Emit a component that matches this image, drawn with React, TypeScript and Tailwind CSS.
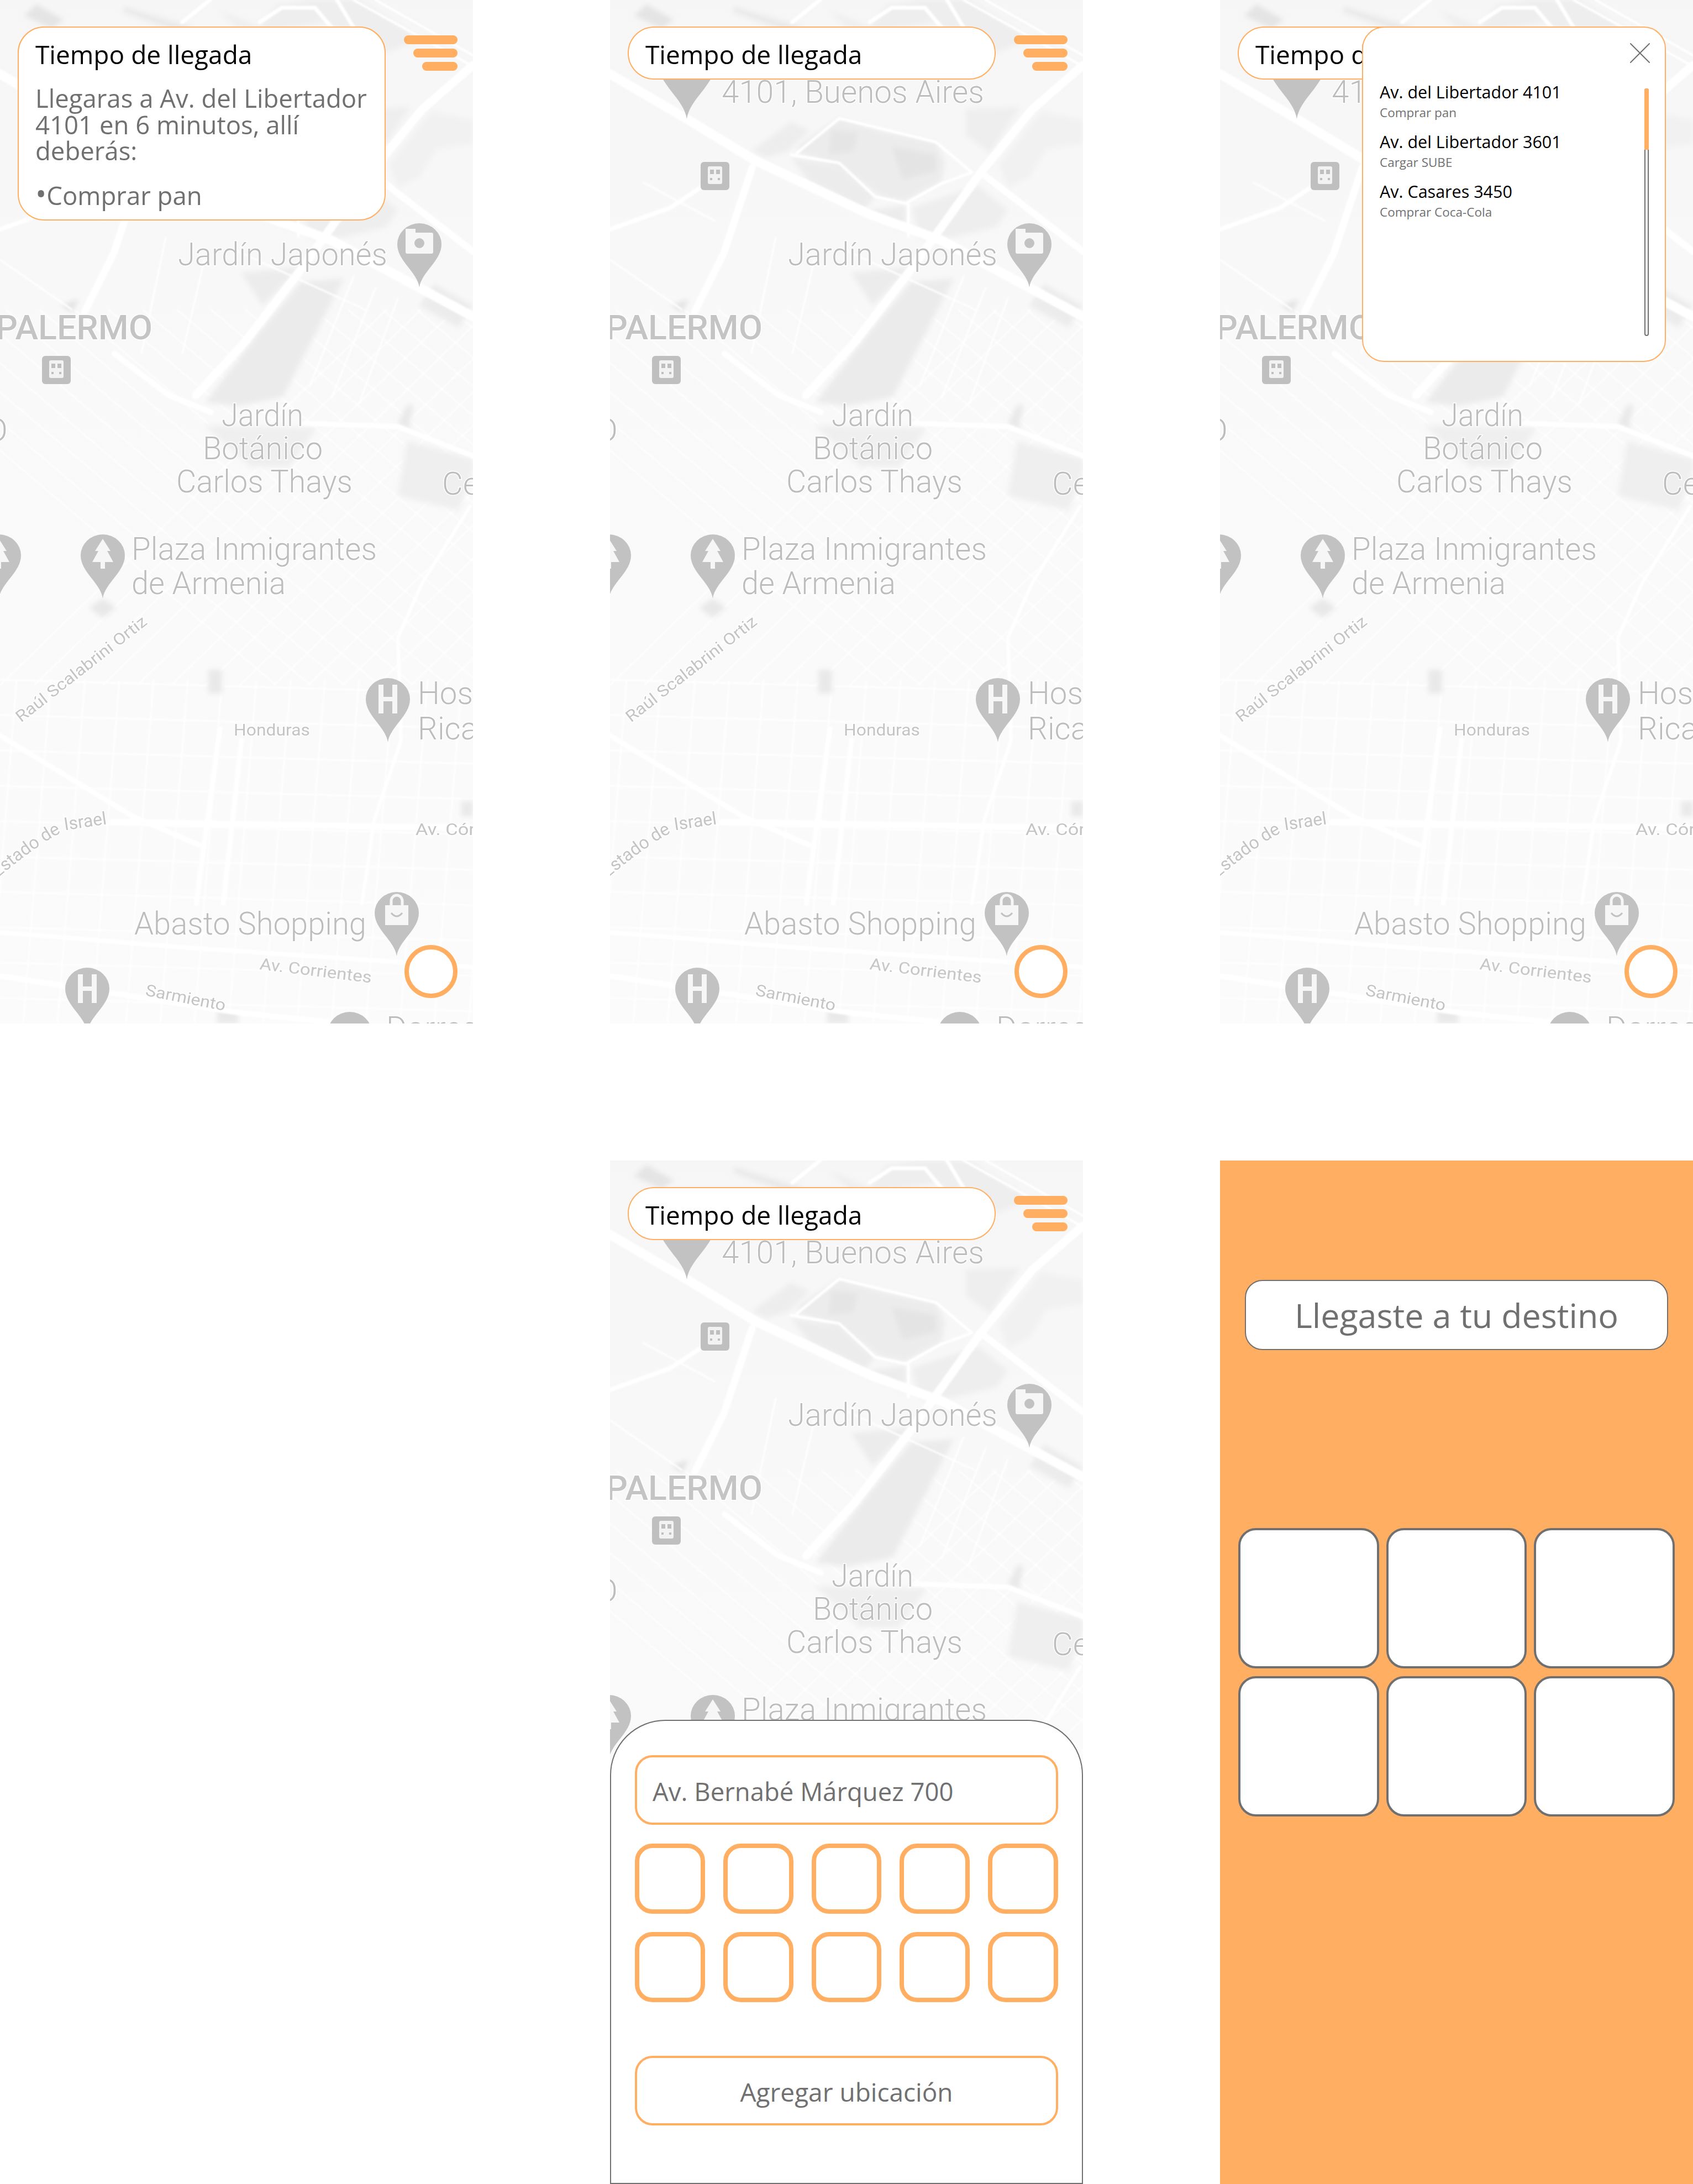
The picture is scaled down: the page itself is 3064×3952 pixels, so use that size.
import React from "react";
import { X } from "lucide-react";

const blobs: { pts: string; fill: string }[] = [
  { pts: "44,28 66,8 115,36 93,51", fill: "#e4e4e4" },
  { pts: "224,12 350,50 330,60 224,22", fill: "#e9e9e9" },
  { pts: "398,20 470,50 500,10 560,0 650,0 760,70 700,95 620,60 590,40 470,60 430,50", fill: "#eeeeee" },
  { pts: "257,273 328,221 360,237 322,273 284,285", fill: "#ededed" },
  { pts: "344,261 415,214 491,237 590,257 606,293 600,328 535,364 491,356 415,300 338,277", fill: "#ececec" },
  { pts: "400,235 450,240 440,275 395,280", fill: "#e5e5e5" },
  { pts: "510,265 590,280 590,310 530,325", fill: "#e4e4e4" },
  { pts: "328,285 415,300 480,356 459,380 360,328", fill: "#ececec" },
  { pts: "644,198 742,194 688,277 644,245", fill: "#eeeeee" },
  { pts: "704,297 780,202 856,217 856,260 790,270 760,320 720,340", fill: "#f1f1f1" },
  { pts: "546,376 666,336 720,380 700,410 620,430 560,430", fill: "#eeeeee" },
  { pts: "469,380 535,372 535,420", fill: "#ececec" },
  { pts: "437,494 546,482 475,553", fill: "#ececec" },
  { pts: "622,504 512,718 430,735 372,728 470,600 545,510", fill: "#ebebeb" },
  { pts: "371,770 573,774 524,845 453,845", fill: "#efefef" },
  { pts: "737,798 856,830 856,853 830,924 720,897", fill: "#efefef" },
  { pts: "720,766 737,733 748,733 740,778", fill: "#e9e9e9" },
  { pts: "759,553 786,514 856,553 830,593", fill: "#ececec" },
  { pts: "110,553 142,541 131,565", fill: "#e3e3e3" },
  { pts: "377,1212 402,1212 402,1255 377,1255", fill: "#e9e9e9" },
  { pts: "393,1829 431,1829 431,1852 393,1852", fill: "#e9e9e9" },
  { pts: "835,1450 856,1450 856,1477 835,1477", fill: "#e9e9e9" },
];

const roads: { d: string; w: number }[] = [
  { d: "M0 134 L142 217 L262 290 L470 388 L600 435 L856 573", w: 17 },
  { d: "M856 118 L764 198 L671 312 L546 486 L442 620 L355 715", w: 15 },
  { d: "M257 304 L207 455 L153 565", w: 13 },
  { d: "M0 415 L109 376 L169 336", w: 8 },
  { d: "M338 277 L415 214 L590 257 L655 312 L600 332 L535 368 L480 356 L415 295 L328 280", w: 5 },
  { d: "M540 368 L540 428", w: 5 },
  { d: "M671 312 L856 455", w: 12 },
  { d: "M380 0 L330 40 M610 0 L640 50 M470 40 L510 14 L570 14 L600 50", w: 7 },
  { d: "M640 0 L856 120 M680 0 L856 100", w: 4 },
  { d: "M551 766 L720 772 L856 825", w: 9 },
  { d: "M207 640 L305 715 L382 746", w: 10 },
  { d: "M851 916 L764 1055 L720 1154 L726 1339 L677 1485 L655 1635", w: 6 },
  { d: "M202 1487 L753 1497 L856 1497", w: 11 },
  { d: "M0 1331 L240 1477 L360 1529", w: 9 },
  { d: "M398 1319 L355 1635", w: 9 },
  { d: "M437 1339 L404 1635", w: 9 },
  { d: "M0 1687 L327 1714 L856 1750", w: 8 },
  { d: "M0 1766 L437 1833 L620 1852", w: 10 },
  { d: "M300 430 L256 640 M370 470 L330 640 M420 450 L660 560", w: 3 },
  { d: "M640 500 L560 700 M680 520 L600 720 M720 540 L650 730", w: 3 },
  { d: "M0 470 L130 560 M60 330 L190 400", w: 3 },
];

const labels: { text: string; x: number; y: number; w: number; size: number; heavy?: boolean; rotate?: number }[] = [
  { text: "4101, Buenos Aires", x: 202, y: 186, w: 475, size: 58 },
  { text: "Jardín Japonés", x: 322, y: 480, w: 379, size: 58 },
  { text: "PALERMO", x: -8, y: 614, w: 284, size: 62, heavy: true },
  { text: "Jardín", x: 401, y: 771, w: 148, size: 58 },
  { text: "Botánico", x: 367, y: 831, w: 217, size: 58 },
  { text: "Carlos Thays", x: 319, y: 891, w: 319, size: 58 },
  { text: "Ce", x: 800, y: 895, w: 68, size: 58 },
  { text: "O", x: -28, y: 798, w: 42, size: 58 },
  { text: "Plaza Inmigrantes", x: 238, y: 1013, w: 444, size: 58 },
  { text: "de Armenia", x: 238, y: 1075, w: 279, size: 58 },
  { text: "Hos", x: 756, y: 1274, w: 100, size: 58 },
  { text: "Rica", x: 756, y: 1338, w: 108, size: 58 },
  { text: "Honduras", x: 423, y: 1331, w: 138, size: 29, heavy: true },
  { text: "Av. Cór", x: 752, y: 1511, w: 108, size: 29, heavy: true },
  { text: "Abasto Shopping", x: 243, y: 1691, w: 420, size: 58 },
  { text: "Av. Corrientes", x: 469, y: 1754, w: 204, size: 29, heavy: true, rotate: 7 },
  { text: "Sarmiento", x: 262, y: 1801, w: 147, size: 29, heavy: true, rotate: 11 },
  { text: "Raúl Scalabrini Ortiz", x: 38, y: 1308, w: 292, size: 29, heavy: true, rotate: -38 },
  { text: "Dorrego", x: 699, y: 1880, w: 200, size: 58 },
];

const Pin = ({ x, y, scale = 1, children }: { x: number; y: number; scale?: number; children?: React.ReactNode }) => (
  <g transform={`translate(${x} ${y}) scale(${scale})`}>
    <path d="M0 0 C-4 -28 -40 -48 -40 -78 A40 38 0 0 1 40 -78 C40 -48 4 -28 0 0Z" fill="#c2c2c2" />
    {children}
  </g>
);

const HIcon = () => <path d="M-17 -104 h9 v22 h16 v-22 h9 v52 h-9 v-22 h-16 v22 h-9z" fill="#f6f6f6" />;

const TreeIcon = () => <path d="M0 -108 L14 -86 L8 -86 L19 -66 L4 -66 L4 -54 L-4 -54 L-4 -66 L-19 -66 L-8 -86 L-14 -86Z" fill="#f6f6f6" />;

const Transit = ({ x, y }: { x: number; y: number }) => (
  <g transform={`translate(${x} ${y})`}>
    <rect width="52" height="51" rx="6" fill="#bfbfbf" />
    <rect x="13" y="8" width="26" height="32" rx="3" fill="#f2f2f2" />
    <rect x="17" y="14" width="7" height="8" fill="#bfbfbf" />
    <rect x="28" y="14" width="7" height="8" fill="#bfbfbf" />
    <rect x="17" y="29" width="4" height="4" fill="#bfbfbf" />
    <rect x="31" y="29" width="4" height="4" fill="#bfbfbf" />
  </g>
);

const diagonalA = Array.from({ length: 26 }, (_, i) => i * 62 - 300);
const verticals = Array.from({ length: 15 }, (_, i) => i * 62);
const horizontals = Array.from({ length: 10 }, (_, i) => 1230 + i * 64);

// the google map behind the first four screens, redrawn
const MapBackground = () => (
  <svg viewBox="0 0 856 1852" className="absolute inset-0 h-[1852px] w-[856px]">
    <defs>
      <linearGradient id="mapShade" x1="0" y1="0" x2="0" y2="1">
        <stop offset="0" stopColor="#f6f6f6" />
        <stop offset="0.4" stopColor="#f9f9f9" />
        <stop offset="1" stopColor="#fbfbfb" />
      </linearGradient>
      <filter id="softBlob">
        <feGaussianBlur stdDeviation="4" />
      </filter>
      <filter id="soft">
        <feGaussianBlur stdDeviation="1.6" />
      </filter>
      <filter id="softText">
        <feGaussianBlur stdDeviation="0.7" />
      </filter>
    </defs>
    <rect width="856" height="1852" fill="url(#mapShade)" />
    <g filter="url(#soft)">
      <g stroke="#ffffff" strokeWidth="2.5" opacity="0.9">
        {diagonalA.map((o) => (
          <line key={`a${o}`} x1={o} y1={560} x2={o + 800} y2={1240} />
        ))}
        {diagonalA.map((o) => (
          <line key={`b${o}`} x1={o + 300} y1={1240} x2={o + 1000} y2={560} />
        ))}
      </g>
      <g stroke="#ffffff" strokeWidth="3" opacity="0.9">
        {verticals.map((o) => (
          <line key={`v${o}`} x1={o + 30} y1={1230} x2={o - 20} y2={1852} />
        ))}
        {horizontals.map((o) => (
          <line key={`h${o}`} x1={0} y1={o} x2={856} y2={o + 24} />
        ))}
      </g>
    </g>
    <g filter="url(#softBlob)">
      {blobs.map((b) => (
        <polygon key={b.pts} points={b.pts} fill={b.fill} />
      ))}
      <path d="M186 1083 L210 1100 L186 1118 L162 1100Z" fill="#e8e8e8" />
    </g>
    <g filter="url(#soft)" fill="none" stroke="#ffffff" strokeLinejoin="round" strokeLinecap="round">
      {roads.map((r) => (
        <path key={r.d} d={r.d} strokeWidth={r.w} />
      ))}
    </g>
    <g filter="url(#softText)">
      <Pin x={139} y={215} scale={1.3} />
      <Pin x={759} y={520}>
        <rect x="-25" y="-99" width="50" height="38" rx="3" fill="#f6f6f6" />
        <rect x="-25" y="-106" width="18" height="8" fill="#f6f6f6" />
        <circle cy="-80" r="9" fill="#c2c2c2" />
      </Pin>
      <Pin x={186} y={1083}>
        <TreeIcon />
      </Pin>
      <Pin x={-2} y={1083}>
        <TreeIcon />
      </Pin>
      <Pin x={702} y={1343}>
        <HIcon />
      </Pin>
      <Pin x={158} y={1867}>
        <HIcon />
      </Pin>
      <Pin x={718} y={1730}>
        <rect x="-21" y="-92" width="42" height="36" fill="#f6f6f6" />
        <path d="M-10 -92 V-100 A10 10 0 0 1 10 -100 V-92" fill="none" stroke="#f6f6f6" strokeWidth="5" />
        <path d="M-10 -78 Q0 -66 10 -78" fill="none" stroke="#c2c2c2" strokeWidth="3" />
      </Pin>
      <Pin x={633} y={1947} />
      <Transit x={164} y={293} />
      <Transit x={76} y={644} />
      <g className="font-['Roboto',sans-serif]">
        {labels.map((l) => (
          <text
            key={l.text}
            x={l.x}
            y={l.y}
            fontSize={l.size}
            fontWeight={l.size > 60 ? 500 : l.heavy ? 400 : 300}
            fill={l.heavy ? "#c4c4c4" : "#bdbdbd"}
            stroke="#ffffff"
            strokeWidth={3}
            paintOrder="stroke"
            textLength={l.w}
            lengthAdjust="spacingAndGlyphs"
            transform={l.rotate ? `rotate(${l.rotate} ${l.x} ${l.y})` : undefined}
          >
            {l.text}
          </text>
        ))}
        <path id="israel" d="M-20 1602 Q70 1525 120 1502 L215 1488" fill="none" />
        <text fontSize={32} fill="#c4c4c4" stroke="#ffffff" strokeWidth={3} paintOrder="stroke">
          <textPath href="#israel" startOffset={20}>
            Estado de Israel
          </textPath>
        </text>
      </g>
    </g>
  </svg>
);

const MenuIcon = () => (
  <div className="flex w-[97px] flex-col items-end gap-[8px]">
    <div className="h-[16px] w-[97px] rounded-full bg-[#ffae62]" />
    <div className="h-[16px] w-[80px] rounded-full bg-[#ffae62]" />
    <div className="h-[16px] w-[64px] rounded-full bg-[#ffae62]" />
  </div>
);

const ArrivalPill = () => (
  <div className="flex h-[96px] w-[666px] items-center rounded-[48px] border-2 border-[#ffae62] bg-white pl-[30px] pt-[4px] text-[46px] text-black">
    Tiempo de llegada
  </div>
);

const MapScreen = ({ menu = true, children }: { menu?: boolean; children?: React.ReactNode }) => (
  <div className="relative h-[1852px] w-[856px] overflow-hidden">
    <MapBackground />
    {menu && (
      <div className="absolute right-[28px] top-[64px]">
        <MenuIcon />
      </div>
    )}
    <div className="absolute left-[32px] top-[48px]">
      <ArrivalPill />
    </div>
    <div className="absolute left-[732px] top-[1710px] h-[96px] w-[96px] rounded-full border-8 border-[#ffae62] bg-white" />
    {children}
  </div>
);

const ExpandedCard = () => (
  <div className="absolute left-[32px] top-[48px] h-[351px] w-[666px] rounded-[48px] border-2 border-[#ffae62] bg-white pl-[30px] pr-[20px] pt-[18px]">
    <p className="text-[46px] leading-[60px] text-black">Tiempo de llegada</p>
    <p className="mt-[26px] text-[45.5px] leading-[47.5px] text-[#707070]">
      Llegaras a Av. del Libertador 4101 en 6 minutos, allí deberás:
    </p>
    <p className="mt-[33px] text-[45.5px] leading-[47.5px] text-[#707070]">
      <span className="text-[54px] leading-[0]">•</span>Comprar pan
    </p>
  </div>
);

const stops = [
  { place: "Av. del Libertador 4101", task: "Comprar pan" },
  { place: "Av. del Libertador 3601", task: "Cargar SUBE" },
  { place: "Av. Casares 3450", task: "Comprar Coca-Cola" },
];

const StopsPanel = () => (
  <div className="absolute left-[257px] top-[48px] h-[607px] w-[550px] rounded-[40px] border-2 border-[#ffae62] bg-white pl-[30px] pt-[96px]">
    <X className="absolute left-[467px] top-[12px] h-[68px] w-[68px] text-[#707070]" strokeWidth={0.7} />
    <div className="flex flex-col gap-[21px]">
      {stops.map((s) => (
        <div key={s.place} className="flex flex-col">
          <span className="text-[30.5px] leading-[40px] text-black">{s.place}</span>
          <span className="mt-[6px] text-[22.5px] leading-[23px] text-[#707070]">{s.task}</span>
        </div>
      ))}
    </div>
    <div className="absolute left-[509px] top-[110px] h-[448px] w-[8px]">
      <div className="h-full w-full rounded-full border-2 border-[#707070]" />
      <div className="absolute left-0 top-0 h-[111px] w-[8px] rounded-t-full bg-[#ffae62]" />
    </div>
  </div>
);

const AddLocationSheet = () => (
  <div className="absolute inset-x-0 bottom-0 h-[840px] rounded-t-[100px] border-2 border-[#707070] bg-white px-[43px] pt-[62px]">
    <div className="flex h-[126px] items-center rounded-[32px] border-4 border-[#ffae62] pl-[28px] pt-[4px] text-[45.5px] text-[#707070]">
      Av. Bernabé Márquez 700
    </div>
    <div className="mt-[34px] grid grid-cols-5 gap-x-[33px] gap-y-[33px]">
      {Array.from({ length: 10 }, (_, i) => (
        <div key={i} className="h-[127px] rounded-[32px] border-8 border-[#ffae62]" />
      ))}
    </div>
    <div className="mt-[97px] flex h-[126px] items-center justify-center rounded-[32px] border-4 border-[#ffae62] pt-[4px] text-[46px] text-[#707070]">
      Agregar ubicación
    </div>
  </div>
);

const ArrivedScreen = () => (
  <div className="h-[1852px] w-[856px] bg-[#ffae62] pt-[216px]">
    <div className="mx-[45px] flex h-[127px] items-center justify-center rounded-[32px] border-2 border-[#707070] bg-white text-[61px] text-[#707070]">
      Llegaste a tu destino
    </div>
    <div className="ml-[33px] mt-[322px] grid w-[790px] grid-cols-3 gap-x-[13px] gap-y-[14px]">
      {Array.from({ length: 6 }, (_, i) => (
        <div key={i} className="h-[254px] rounded-[32px] border-4 border-[#707070] bg-white" />
      ))}
    </div>
  </div>
);

const App = () => {
  return (
    <div className="grid h-[3952px] w-[3064px] grid-cols-[repeat(3,856px)] grid-rows-[repeat(2,1852px)] gap-x-[248px] gap-y-[248px] bg-white font-['Open_Sans',sans-serif]">
      <MapScreen>
        <ExpandedCard />
      </MapScreen>
      <MapScreen />
      <MapScreen menu={false}>
        <StopsPanel />
      </MapScreen>
      <div />
      <MapScreen>
        <AddLocationSheet />
      </MapScreen>
      <ArrivedScreen />
    </div>
  );
};

export default App;
